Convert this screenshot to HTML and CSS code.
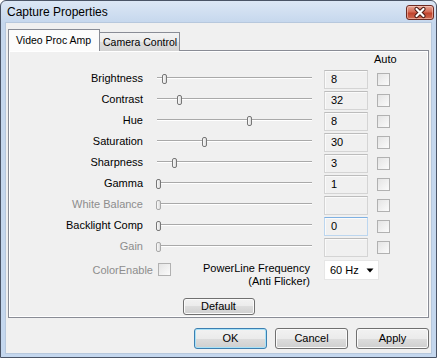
FILE: index.html
```html
<!DOCTYPE html>
<html lang="en">
<head>
    <meta charset="UTF-8">
    <title>Capture Properties</title>
    <link rel="stylesheet" href="styles.css">
</head>
<body>
    <div class="window">
        <div class="titlebar">
            <span class="title">Capture Properties</span>
            <div class="close">
                <svg width="26" height="13" viewBox="0 0 26 13">
                    <path d="M9.5 3 L16.5 10 M16.5 3 L9.5 10" stroke="#4a1a14" stroke-width="4.2" stroke-linecap="round"/>
                    <path d="M9.5 3 L16.5 10 M16.5 3 L9.5 10" stroke="#fff" stroke-width="2.2" stroke-linecap="round"/>
                </svg>
            </div>
        </div>

        <div class="client">
            <div class="tabs">
                <div class="tab active">Video Proc Amp</div>
                <div class="tab">Camera Control</div>
            </div>

            <div class="panel">
                <div class="grid">
                    <div></div><div></div><div></div><div class="auto">Auto</div>

                    <div class="label">Brightness</div>
                    <div class="slider"><div class="track"></div><div class="thumb" style="left: 7px"></div></div>
                    <div class="edit">8</div>
                    <div class="check"></div>

                    <div class="label">Contrast</div>
                    <div class="slider"><div class="track"></div><div class="thumb" style="left: 22px"></div></div>
                    <div class="edit">32</div>
                    <div class="check"></div>

                    <div class="label">Hue</div>
                    <div class="slider"><div class="track"></div><div class="thumb" style="left: 92px"></div></div>
                    <div class="edit">8</div>
                    <div class="check"></div>

                    <div class="label">Saturation</div>
                    <div class="slider"><div class="track"></div><div class="thumb" style="left: 47px"></div></div>
                    <div class="edit">30</div>
                    <div class="check"></div>

                    <div class="label">Sharpness</div>
                    <div class="slider"><div class="track"></div><div class="thumb" style="left: 17px"></div></div>
                    <div class="edit">3</div>
                    <div class="check"></div>

                    <div class="label">Gamma</div>
                    <div class="slider"><div class="track"></div><div class="thumb" style="left: 1px"></div></div>
                    <div class="edit">1</div>
                    <div class="check"></div>

                    <div class="label disabled">White Balance</div>
                    <div class="slider"><div class="track"></div><div class="thumb off" style="left: 1px"></div></div>
                    <div class="edit"></div>
                    <div class="check"></div>

                    <div class="label">Backlight Comp</div>
                    <div class="slider"><div class="track"></div><div class="thumb" style="left: 1px"></div></div>
                    <div class="edit focus">0</div>
                    <div class="check"></div>

                    <div class="label disabled">Gain</div>
                    <div class="slider"><div class="track"></div><div class="thumb off" style="left: 1px"></div></div>
                    <div class="edit"></div>
                    <div class="check"></div>
                </div>

                <div class="extra">
                    <div class="color-label disabled">ColorEnable</div>
                    <div class="check color-check"></div>
                    <div class="power-label">PowerLine Frequency<br>(Anti Flicker)</div>
                    <div class="combo">
                        <span>60 Hz</span>
                        <svg width="8" height="5" viewBox="0 0 8 5"><path d="M0.5 0.5 H7.5 L4 4.5 Z" fill="#000"/></svg>
                    </div>
                </div>

                <div class="default-row">
                    <div class="btn small">Default</div>
                </div>
            </div>

            <div class="actions">
                <div class="btn primary">OK</div>
                <div class="btn">Cancel</div>
                <div class="btn">Apply</div>
            </div>
        </div>
    </div>
</body>
</html>
```

FILE: styles.css
```css
body {
    margin: 0;
    background: #fff;
    font-family: "Liberation Sans", Arial, sans-serif;
    font-size: 11px;
    color: #000;
}

.window {
    width: 437px;
    height: 358px;
    box-sizing: border-box;
    border: 1px solid #4a5466;
    border-radius: 6px 6px 0 0;
    background: linear-gradient(#dce7f5, #c5d7ed 22px, #c4d7ee);
    padding: 0 5px 4px;
    display: flex;
    flex-direction: column;
}

.titlebar {
    height: 22px;
    display: flex;
    align-items: flex-start;
    justify-content: space-between;
}

.title {
    font-size: 12px;
    padding: 4px 0 0 1px;
}

.close {
    width: 26px;
    height: 13px;
    margin: 4px -3px 0 0;
    border: 1px solid #6d2a22;
    border-radius: 3px;
    background: linear-gradient(#e8a797, #d46a55 45%, #c0432d 55%, #cf6a52);
    box-shadow: inset 0 0 0 1px rgba(255, 220, 210, 0.5);
}

.close svg {
    display: block;
}

.client {
    flex: 1;
    background: #f0f0f0;
    padding: 6px 2px 4px 2px;
    display: flex;
    flex-direction: column;
    box-shadow: 0 0 0 1px #b7c8dd;
}

.tabs {
    display: flex;
    align-items: flex-end;
    height: 22px;
    position: relative;
    z-index: 1;
}

.tab {
    width: 80px;
    height: 19px;
    box-sizing: border-box;
    border: 1px solid #898c95;
    border-bottom: none;
    border-left: none;
    background: linear-gradient(#f3f3f3, #ebebeb 50%, #dddddd 50%, #d4d4d4);
    font-size: 10.5px;
    line-height: 18px;
    padding-left: 3px;
    white-space: nowrap;
    overflow: hidden;
}

.tab.active {
    width: 92px;
    height: 22px;
    border-left: 1px solid #898c95;
    background: #fcfcfc;
    line-height: 21px;
    padding-left: 7px;
}

.panel {
    margin-top: -1px;
    height: 268px;
    box-sizing: border-box;
    border: 1px solid #898c95;
    background: #f0f0f0;
    box-shadow: inset 1px 1px #fff, inset -1px -1px #fff;
    padding: 1px 0 0 11px;
}

.grid {
    display: grid;
    grid-template-columns: 123px 170px 55px 22px;
    grid-template-rows: 18px;
    grid-auto-rows: 21px;
    align-items: start;
}

.auto {
    padding-left: 6px;
    line-height: 14px;
    white-space: nowrap;
}

.label {
    text-align: right;
    line-height: 14px;
    margin-top: 1px;
    white-space: nowrap;
}

.disabled {
    color: #8d8d8d;
}

.slider {
    position: relative;
    width: 158px;
    height: 19px;
    margin-left: 12px;
}

.track {
    margin: 7px 1px 0 2px;
    height: 1px;
    background: #a9a9a9;
    border-bottom: 1px solid #fff;
}

.thumb {
    position: absolute;
    top: 4px;
    width: 3px;
    height: 8px;
    border: 1px solid #777;
    border-radius: 2px;
    background: linear-gradient(90deg, #fafafa, #dcdcdc);
}

.thumb.off {
    border-color: #a8a8a8;
}

.edit {
    margin-left: 11px;
    width: 44px;
    height: 19px;
    box-sizing: border-box;
    border: 1px solid #d4d4d4;
    border-top-color: #bcbcbc;
    box-shadow: inset 1px 1px #fafafa;
    background: #f0f0f0;
    line-height: 17px;
    padding-left: 6px;
}

.edit.focus {
    border-color: #bcd6ef;
    border-top-color: #7eb0e2;
}

.check {
    width: 13px;
    height: 13px;
    box-sizing: border-box;
    margin: 3px 0 0 9px;
    border: 1px solid #b1b1b1;
    background: linear-gradient(135deg, #e4e4e4, #fbfbfb);
}

.extra {
    display: flex;
    align-items: flex-start;
    margin-top: 1px;
    height: 28px;
}

.color-label {
    width: 133px;
    text-align: right;
    line-height: 14px;
    margin-top: 3px;
}

.color-check {
    margin-left: 5px;
}

.power-label {
    width: 139px;
    text-align: right;
    line-height: 13px;
    margin-top: 2px;
}

.combo {
    margin-left: 14px;
    width: 55px;
    height: 20px;
    box-sizing: border-box;
    border: 1px solid #e6e6e6;
    background: #fff;
    display: flex;
    align-items: center;
    justify-content: space-between;
    padding: 0 4px 0 5px;
}

.default-row {
    display: flex;
    justify-content: center;
    margin: 10px 0 0 -11px;
}

.btn {
    width: 73px;
    height: 21px;
    box-sizing: border-box;
    border: 1px solid #707070;
    border-radius: 3px;
    background: linear-gradient(#f2f2f2, #ebebeb 50%, #dddddd 50%, #cfcfcf);
    box-shadow: inset 0 0 0 1px #fbfbfb;
    text-align: center;
    line-height: 19px;
}

.btn.small {
    width: 72px;
    height: 17px;
    line-height: 15px;
}

.btn.primary {
    border-color: #3c7fb1;
    box-shadow: inset 0 0 0 1px #a8e2f8;
}

.actions {
    display: flex;
    justify-content: flex-end;
    gap: 8px;
    margin-top: 10px;
}
```
